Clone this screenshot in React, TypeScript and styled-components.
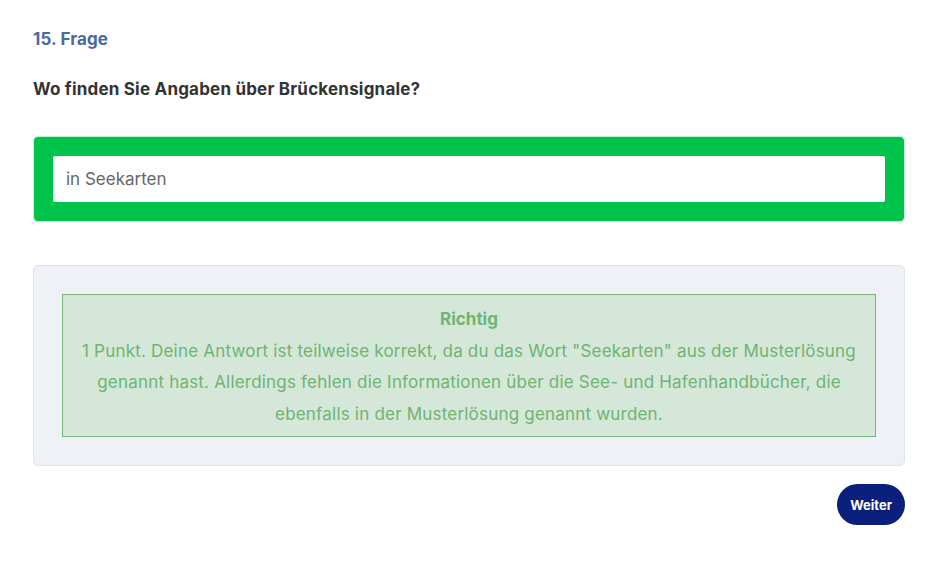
import React from 'react'
import styled, { createGlobalStyle } from 'styled-components'

const GlobalStyle = createGlobalStyle`
  body {
    margin: 0;
    background: #ffffff;
    font-family: Inter, "Noto Sans", sans-serif;
  }
`

const Page = styled.div`
  width: 872px;
  padding: 26px 0 40px 33px;
`

const Counter = styled.h2`
  margin: 0;
  font-size: 17px;
  line-height: 26px;
  font-weight: 700;
  letter-spacing: 0.1px;
  color: #4a6a9f;
`

const Question = styled.h3`
  margin: 24px 0 0;
  font-size: 17px;
  line-height: 26px;
  font-weight: 700;
  letter-spacing: 0.2px;
  color: #333333;
`

const AnswerFrame = styled.div`
  margin-top: 34px;
  padding: 19px;
  background: #00c34b;
  border: 1px solid #c8efd5;
  border-radius: 5px;
`

const AnswerField = styled.div`
  height: 46px;
  display: flex;
  align-items: center;
  padding: 0 13px;
  background: #ffffff;
  border-radius: 2px;
  font-size: 17px;
  color: #666666;
`

const FeedbackPanel = styled.div`
  margin-top: 43px;
  padding: 28px;
  background: #eef2f6;
  border: 1px solid #dde3ea;
  border-radius: 5px;
`

const FeedbackBox = styled.div`
  padding: 9px 10px 6px;
  background: #d4e7d9;
  border: 1px solid #76b37f;
  text-align: center;
  font-size: 17px;
  line-height: 31.5px;
  letter-spacing: 0.2px;
  color: #6fb472;
`

const FeedbackTitle = styled.div`
  font-weight: 700;
  letter-spacing: 0;
`

const Actions = styled.div`
  display: flex;
  justify-content: flex-end;
  margin-top: 18px;
`

const NextButton = styled.button`
  height: 41px;
  padding: 0 13px;
  border: none;
  border-radius: 21px;
  background: #0b1f7c;
  color: #ffffff;
  font-family: Inter, "Noto Sans", sans-serif;
  font-size: 13px;
  font-weight: 700;
  cursor: pointer;
`

export default function App() {
  return (
    <Page>
      <GlobalStyle />
      <Counter>15. Frage</Counter>
      <Question>Wo finden Sie Angaben über Brückensignale?</Question>
      <AnswerFrame>
        <AnswerField>in Seekarten</AnswerField>
      </AnswerFrame>
      <FeedbackPanel>
        <FeedbackBox>
          <FeedbackTitle>Richtig</FeedbackTitle>
          1 Punkt. Deine Antwort ist teilweise korrekt, da du das Wort "Seekarten" aus der
          Musterlösung genannt hast. Allerdings fehlen die Informationen über die See- und
          Hafenhandbücher, die ebenfalls in der Musterlösung genannt wurden.
        </FeedbackBox>
      </FeedbackPanel>
      <Actions>
        <NextButton>Weiter</NextButton>
      </Actions>
    </Page>
  )
}
